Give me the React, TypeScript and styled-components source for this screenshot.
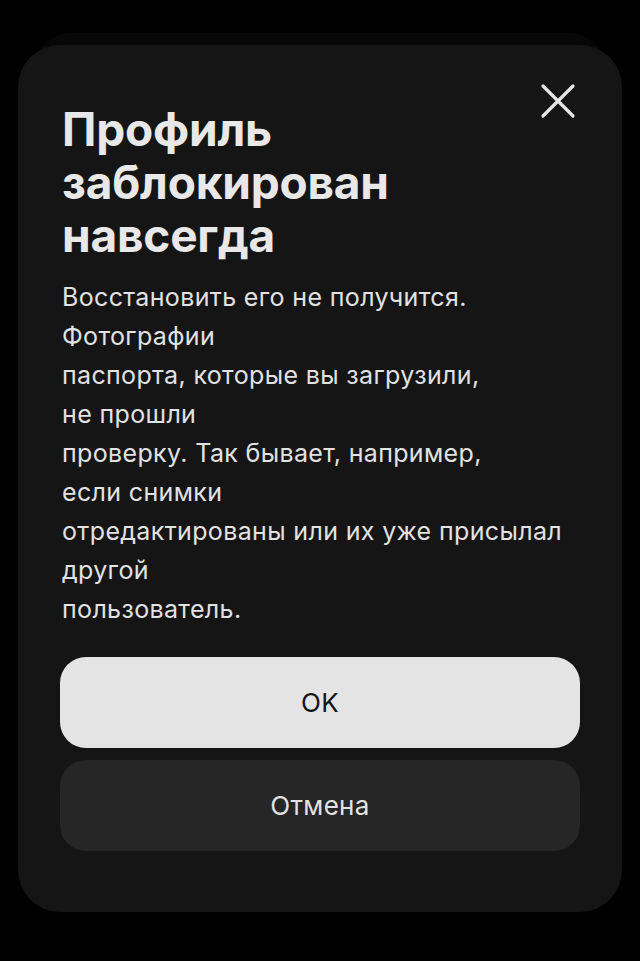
import { createGlobalStyle } from 'styled-components'
import styled from 'styled-components'

const Global = createGlobalStyle`
  html, body {
    margin: 0;
    padding: 0;
    background: #000;
  }
  body {
    font-family: Inter, "Noto Sans", sans-serif;
    -webkit-font-smoothing: antialiased;
  }
`

const Screen = styled.div`
  position: relative;
  z-index: 0;
  min-height: 961px;
  padding: 45px 18px 49px;
  box-sizing: border-box;
  background: #000;
`

const Card = styled.div`
  position: relative;
  display: flex;
  flex-direction: column;
  padding: 58px 42px 61px 42px;
  background: #151515;
  border-radius: 42px;
  box-sizing: border-box;
  /* faint sheet peeking out behind the card */
  &::before {
    content: '';
    position: absolute;
    top: -12px;
    left: 14px;
    right: 14px;
    height: 80px;
    border-radius: 40px;
    background: #070707;
    z-index: -1;
  }
`

const Header = styled.div`
  display: flex;
  align-items: flex-start;
  padding-left: 2px;
`

const Title = styled.h1`
  flex: 1;
  margin: 0;
  padding-right: 40px;
  font-size: 46px;
  line-height: 53px;
  font-weight: 700;
  letter-spacing: -0.2px;
  color: #e8e8e8;
`

const CloseBtn = styled.button`
  position: absolute;
  top: 38px;
  right: 46px;
  width: 36px;
  height: 36px;
  padding: 0;
  border: none;
  background: none;
  cursor: pointer;
  svg { display: block; }
`

const Text = styled.p`
  margin: 16px 0 0 2px;
  white-space: pre-line;
  font-size: 25px;
  line-height: 39px;
  color: #e2e2e2;
  letter-spacing: 0.35px;
`

const Actions = styled.div`
  display: flex;
  flex-direction: column;
  gap: 12px;
  margin-top: 28px;
`

const Button = styled.button<{ $primary?: boolean }>`
  height: 91px;
  border: none;
  border-radius: 26px;
  font-family: inherit;
  font-size: 26px;
  font-weight: 400;
  letter-spacing: 0.3px;
  cursor: pointer;
  background: ${p => (p.$primary ? '#e4e4e4' : '#262626')};
  color: ${p => (p.$primary ? '#141414' : '#e2e2e2')};
`

const message = `Восстановить его не получится.
Фотографии
паспорта, которые вы загрузили,
не прошли
проверку. Так бывает, например,
если снимки
отредактированы или их уже присылал
другой
пользователь.`

export default function App() {
  return (
    <Screen>
      <Global />
      <Card>
        <CloseBtn aria-label='close'>
          <svg width='36' height='36' viewBox='0 0 36 36'>
            <path d='M3 3L33 33M33 3L3 33' stroke='#e6e6e6' strokeWidth='3.2' strokeLinecap='round' />
          </svg>
        </CloseBtn>
        <Header>
          <Title>Профиль заблокирован навсегда</Title>
        </Header>
        <Text>{message}</Text>
        <Actions>
          <Button $primary>OK</Button>
          <Button>Отмена</Button>
        </Actions>
      </Card>
    </Screen>
  )
}
